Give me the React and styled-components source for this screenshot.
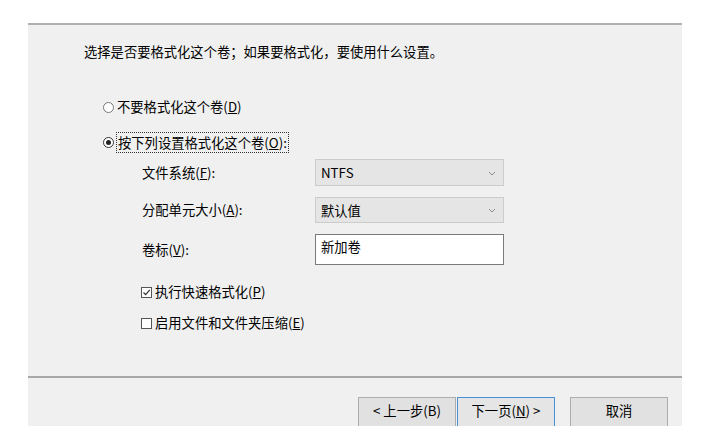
import React from 'react';
import styled, { createGlobalStyle } from 'styled-components';

const GlobalStyle = createGlobalStyle`
    html, body {
        margin: 0;
        padding: 0;
        background: #ffffff;
    }
    body {
        font-family: "Noto Sans CJK SC", "Noto Sans", sans-serif;
        font-size: 13.3px;
        color: #000000;
    }
`;

function Key({children}) {
    return <u>{children}</u>;
}

function Chevron() {
    return (
        <svg width="8" height="5" viewBox="0 0 8 5">
            <path d="M1 1 L4 4 L7 1" fill="none" stroke="#8a8a8a" strokeWidth="1"/>
        </svg>
    );
}

function CheckMark() {
    return (
        <svg width="9" height="9" viewBox="0 0 9 9">
            <path d="M1.5 4.5 L3.7 6.7 L7.8 1.8" fill="none" stroke="#333" strokeWidth="1.2"/>
        </svg>
    );
}

function App() {
    return (
        <Screen>
            <GlobalStyle/>
            <Dialog>
                <Body>
                    <Prompt>选择是否要格式化这个卷；如果要格式化，要使用什么设置。</Prompt>
                    <RadioRow>
                        <Radio/>
                        <span>不要格式化这个卷(<Key>D</Key>)</span>
                    </RadioRow>
                    <RadioRow $gap={15}>
                        <Radio $checked/>
                        <FocusLabel>按下列设置格式化这个卷(<Key>O</Key>):</FocusLabel>
                    </RadioRow>
                    <Settings>
                        <FieldLabel>文件系统(<Key>F</Key>):</FieldLabel>
                        <Select $h={27}>
                            <span>NTFS</span>
                            <Chevron/>
                        </Select>
                        <FieldLabel>分配单元大小(<Key>A</Key>):</FieldLabel>
                        <Select $h={26}>
                            <span>默认值</span>
                            <Chevron/>
                        </Select>
                        <FieldLabel>卷标(<Key>V</Key>):</FieldLabel>
                        <TextBox>新加卷</TextBox>
                    </Settings>
                    <CheckRow $gap={17}>
                        <Box><CheckMark/></Box>
                        <span>执行快速格式化(<Key>P</Key>)</span>
                    </CheckRow>
                    <CheckRow $gap={11}>
                        <Box/>
                        <span>启用文件和文件夹压缩(<Key>E</Key>)</span>
                    </CheckRow>
                </Body>
                <Footer>
                    <Button>&lt; 上一步(B)</Button>
                    <Button $primary>下一页(<Key>N</Key>) &gt;</Button>
                    <Button $spaced>取消</Button>
                </Footer>
            </Dialog>
        </Screen>
    );
}

const Screen = styled.div`
    padding: 23px 0 0 28px;
    height: 403px;
    overflow: hidden;
`;

const Dialog = styled.div`
    width: 654px;
    background: #f0f0f0;
    border-top: 2px solid #b0b0b0;
`;

const Body = styled.div`
    height: 351px;
    padding: 17px 0 0 56px;
    box-sizing: border-box;
    display: flex;
    flex-direction: column;
    align-items: flex-start;
`;

const Prompt = styled.div`
    line-height: 20px;
    white-space: nowrap;
`;

const RadioRow = styled.div`
    display: flex;
    align-items: center;
    height: 20px;
    margin: ${p => p.$gap || 35}px 0 0 19px;
    gap: 3px;
    line-height: 20px;
    white-space: nowrap;
`;

const Radio = styled.span`
    width: 9px;
    height: 9px;
    border: 1px solid ${p => p.$checked ? '#333' : '#777'};
    border-radius: 50%;
    background: #fff;
    display: flex;
    align-items: center;
    justify-content: center;
    &::after {
        content: '';
        display: ${p => p.$checked ? 'block' : 'none'};
        width: 5px;
        height: 5px;
        border-radius: 50%;
        background: #222;
    }
`;

const FocusLabel = styled.span`
    outline: 1px dotted #333;
    padding: 0 1px;
    line-height: 19px;
`;

const Settings = styled.div`
    display: grid;
    grid-template-columns: 173px 189px;
    row-gap: 11px;
    margin: 7px 0 0 58px;
    align-items: center;
`;

const FieldLabel = styled.div`
    line-height: 20px;
    white-space: nowrap;
`;

const Select = styled.div`
    height: ${p => p.$h}px;
    box-sizing: border-box;
    background: #e5e5e5;
    border: 1px solid #cccccc;
    display: flex;
    align-items: center;
    justify-content: space-between;
    padding: 0 7px 0 5px;
    svg {
        margin-top: 1px;
    }
`;

const TextBox = styled.div`
    height: 31px;
    box-sizing: border-box;
    background: #ffffff;
    border: 1px solid #7a7a7a;
    padding: 2px 5px 0;
    line-height: 20px;
`;

const CheckRow = styled.div`
    display: flex;
    align-items: center;
    height: 20px;
    margin: ${p => p.$gap}px 0 0 57px;
    gap: 3px;
    line-height: 20px;
    white-space: nowrap;
`;

const Box = styled.span`
    width: 9px;
    height: 9px;
    border: 1px solid #555;
    background: #fff;
    display: flex;
    align-items: center;
    justify-content: center;
`;

const Footer = styled.div`
    border-top: 2px solid #a8a8a8;
    padding: 19px 14px 0 0;
    height: 60px;
    box-sizing: border-box;
    display: flex;
    justify-content: flex-end;
    align-items: flex-start;
`;

const Button = styled.div`
    width: 98px;
    height: 30px;
    box-sizing: border-box;
    margin-left: ${p => p.$spaced ? 15 : 1}px;
    background: ${p => p.$primary ? '#e5e5e5' : '#e1e1e1'};
    border: 1px solid ${p => p.$primary ? '#4a90d6' : '#adadad'};
    display: flex;
    align-items: center;
    justify-content: center;
    line-height: 20px;
    white-space: nowrap;
    padding-bottom: 2px;
`;

export default App;
